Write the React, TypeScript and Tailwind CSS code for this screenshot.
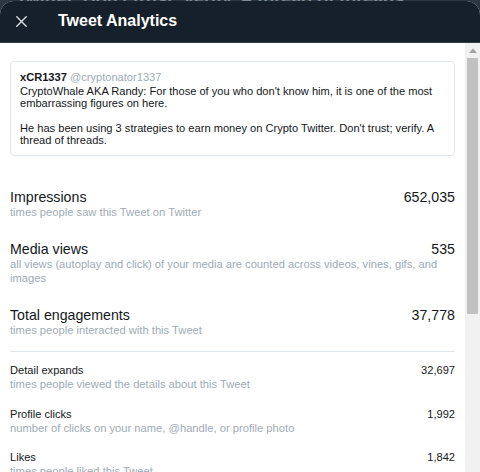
import React from "react";

const rows = [
  { t: "Detail expands", s: "times people viewed the details about this Tweet", v: "32,697" },
  { t: "Profile clicks", s: "number of clicks on your name, @handle, or profile photo", v: "1,992" },
  { t: "Likes", s: "times people liked this Tweet", v: "1,842" },
  { t: "Retweets", s: "times people retweeted this Tweet", v: "586" },
  { t: "Replies", s: "replies to this Tweet", v: "339" },
];

function Big({ t, s, v }: { t: string; s: string; v: string }) {
  return (
    <div>
      <div className="flex justify-between items-start gap-4 text-[14.2px] leading-[17px] text-[#14171a]">
        <div>{t}</div>
        <div className="shrink-0">{v}</div>
      </div>
      <div className="text-[11.2px] leading-[13.6px] text-[#a0abb6] pr-[16px]">{s}</div>
    </div>
  );
}

export default function App() {
  return (
    <div
      className="w-[480px] h-[472px] bg-[#2a3641] flex flex-col overflow-hidden"
      style={{ fontFamily: '"Liberation Sans", Arial, sans-serif' }}
    >
      <div className="relative h-[1px] shrink-0">
        <div className="absolute left-[16px] top-[-14px] text-[18px] font-bold text-[#7f8b95] whitespace-nowrap">
          Twitter. Don't trust; verify. A thread of threads.
        </div>
      </div>
      <div className="relative flex-1 flex flex-col rounded-t-[14px] overflow-hidden bg-white min-h-0">
        <div className="h-[42px] shrink-0 bg-[#15202b] border-b border-[#2f3b47] flex items-center">
          <div className="w-[42px] flex justify-center">
            <svg width="11" height="11" viewBox="0 0 11 11">
              <path d="M0.8 0.8 L10.2 10.2 M10.2 0.8 L0.8 10.2" stroke="#d9dde1" strokeWidth="1.4" strokeLinecap="round" />
            </svg>
          </div>
          <div className="ml-[16px] text-[16px] font-bold text-white leading-none mb-[2px]">Tweet Analytics</div>
        </div>
        <div className="flex-1 flex min-h-0">
          <div className="flex-1 overflow-hidden">
            <div className="pl-[10px] pr-[10px] pt-[18px] pb-[20px]">
              <div className="border border-[#e1e8ed] rounded-[4px] px-[9px] pt-[9px] pb-[9px] text-[11.1px] leading-[12.3px] text-[#14171a]">
                <div className="mb-[1.4px]">
                  <span className="font-bold">xCR1337</span>{" "}
                  <span className="text-[#a0abb6]">@cryptonator1337</span>
                </div>
                <div>
                  CryptoWhale AKA Randy: For those of you who don't know him, it is one of the most embarrassing figures on here.
                </div>
                <div className="mt-[12.3px]">
                  He has been using 3 strategies to earn money on Crypto Twitter. Don't trust; verify. A thread of threads.
                </div>
              </div>
              <div className="mt-[33px] flex flex-col gap-[21.7px]">
                <Big t="Impressions" s="times people saw this Tweet on Twitter" v="652,035" />
                <Big
                  t="Media views"
                  s="all views (autoplay and click) of your media are counted across videos, vines, gifs, and images"
                  v="535"
                />
                <Big t="Total engagements" s="times people interacted with this Tweet" v="37,778" />
              </div>
              <div className="mt-[13px] border-t border-[#e1e8ed]" />
              <div className="mt-[11px] flex flex-col gap-[15px]">
                {rows.map((r) => (
                  <div key={r.t}>
                    <div className="flex justify-between items-start gap-4 text-[11.1px] leading-[15px] text-[#14171a]">
                      <div>{r.t}</div>
                      <div className="shrink-0">{r.v}</div>
                    </div>
                    <div className="text-[11.2px] leading-[13.6px] text-[#a0abb6] pr-[16px]">{r.s}</div>
                  </div>
                ))}
              </div>
            </div>
          </div>
          <div className="w-[15px] shrink-0 bg-[#f1f1f1] flex flex-col items-center">
            <div className="h-[15px] flex items-center justify-center">
              <svg width="8" height="5" viewBox="0 0 8 5">
                <path d="M0 5 L4 0.5 L8 5 Z" fill="#a3a3a3" />
              </svg>
            </div>
            <div className="w-[11px] h-[256px] bg-[#c1c1c1]" />
          </div>
        </div>
      </div>
    </div>
  );
}
